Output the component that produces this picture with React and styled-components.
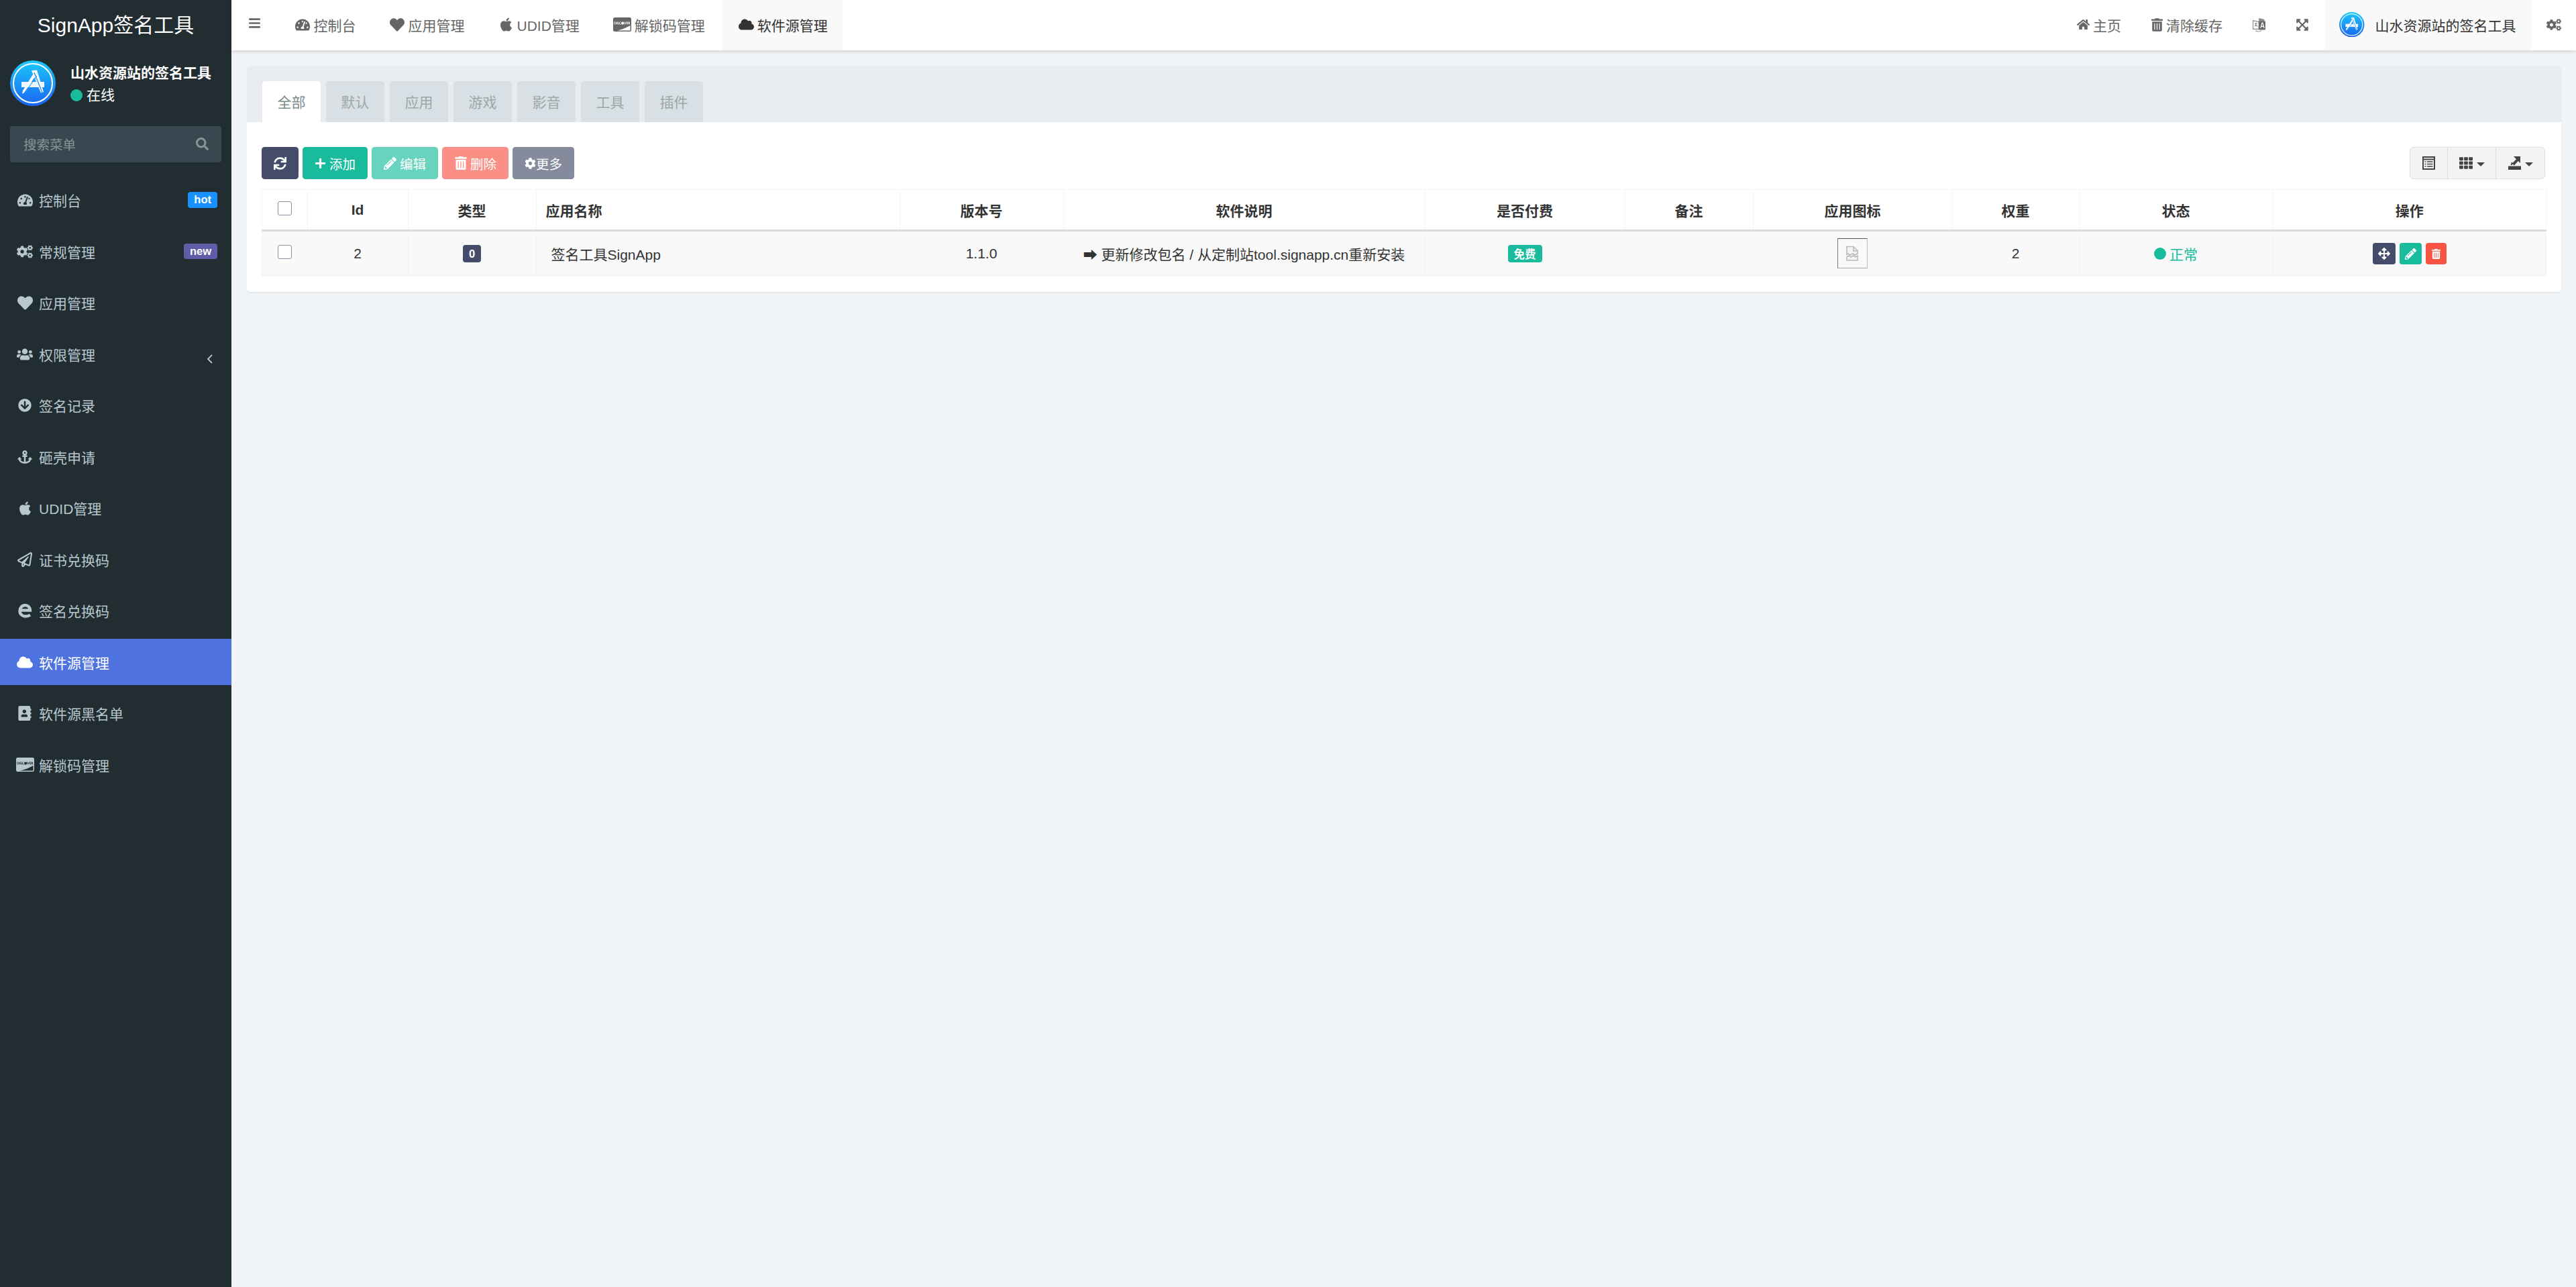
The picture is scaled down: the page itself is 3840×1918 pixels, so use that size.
import React from "react";
import styled, { createGlobalStyle } from "styled-components";
import {
  FaTachometerAlt, FaHeart, FaApple, FaCcDiscover, FaCloud, FaCogs, FaUsers, FaArrowCircleDown,
  FaAnchor, FaRegPaperPlane, FaAddressBook, FaHome, FaTrashAlt, FaExpandArrowsAlt, FaSync,
  FaPlus, FaPencilAlt, FaCog, FaArrowsAlt, FaSearch, FaBars, FaTh,
} from "react-icons/fa";

const FONT = `"Liberation Sans", "Noto Sans CJK SC", sans-serif`;

const Global = createGlobalStyle`
  html, body { margin: 0; padding: 0; height: 100%; background: #f1f4f6; }
  body { font-family: ${FONT}; font-size: 21px; color: #333; }
  * { box-sizing: border-box; }
`;

const Shell = styled.div`display: flex; width: 100%; min-height: 100vh; height: 1918px; overflow: hidden;`;

/* Sidebar */
const Sidebar = styled.aside`width: 345px; flex: none; background: #222d32; display: flex; flex-direction: column;`;
const Logo = styled.div`height: 75px; display: flex; align-items: center; justify-content: center; color: #fff; font-size: 30px; line-height: 75px;`;
const UserPanel = styled.div`display: flex; padding: 15px; height: 98px; gap: 22px;`;
const UserInfo = styled.div`display: flex; flex-direction: column; color: #fff; padding-top: 3px;`;
const UserName = styled.div`font-size: 21px; font-weight: 700; line-height: 32px;`;
const Online = styled.div`display: flex; align-items: center; gap: 6px; font-size: 21px; line-height: 36px; margin-top: -1px;`;
const Dot = styled.span`width: 18px; height: 18px; border-radius: 50%; background: #18bc9c; flex: none;`;
const SearchBox = styled.div`margin: 15px 15px 0; height: 54px; border-radius: 4px; background: #374850; display: flex; align-items: center; justify-content: space-between; padding: 0 19px 2px 20px; color: #8a9396; font-size: 19.5px;`;
const Menu = styled.ul`list-style: none; margin: 21.5px 0 0; padding: 0; display: flex; flex-direction: column; gap: 7.5px;`;
const MenuItem = styled.li`
  height: 69px; display: flex; align-items: center; padding: 0 22px 0 23px; font-size: 21px;
  color: ${(p) => (p.$active ? "#fff" : "#b8c7ce")};
  background: ${(p) => (p.$active ? "#4e73df" : "transparent")};
`;
const MenuIcon = styled.span`width: 28px; flex: none; display: flex; justify-content: center; margin-right: 7px;`;
const MenuLabel = styled.span`flex: 1;`;
const Badge = styled.span`height: 23.5px; padding: 0 9px; border-radius: 4px; font-size: 16.5px; font-weight: 700; line-height: 23px; color: #fff; background: ${(p) => p.$bg}; margin-right: -1px;`;
const Chevron = styled.span`display: flex; margin: 15px 5px 0 0;`;

/* Main */
const Main = styled.main`flex: 1; min-width: 0; display: flex; flex-direction: column;`;
const Navbar = styled.header`height: 75px; background: #fff; display: flex; box-shadow: 0 2px 5px rgba(0,0,0,.14); flex: none; position: relative;`;
const NavGroup = styled.nav`display: flex; gap: ${(p) => p.$gap || 0}px; margin-left: ${(p) => (p.$right ? "auto" : 0)};`;
const Toggle = styled.div`width: 70px; padding: 25px 0 0 25px; color: #666; display: flex;`;
const NavLink = styled.a`
  height: 75px; display: flex; align-items: center; gap: ${(p) => p.$gap ?? 5}px; padding: 0 22.5px 2px;
  font-size: 21px; color: ${(p) => (p.$active ? "#333" : "#666")};
  background: ${(p) => (p.$active ? "#f9f9f9" : "transparent")};
`;
const NavIcon = styled.span`width: ${(p) => p.$w || 27}px; display: flex; justify-content: center; flex: none;`;

const Content = styled.div`flex: 1; padding: 23px 22px 0 23px;`;
const Panel = styled.section`background: #fff; border-radius: 5px; box-shadow: 0 1.5px 1.5px rgba(0,0,0,.05); overflow: hidden;`;
const TabHead = styled.div`height: 84px; background: #e8ecf0; padding: 23px 0 0 23px; display: flex; gap: 8px;`;
const Tab = styled.div`
  width: 87px; height: 61px; border-radius: 4.5px 4.5px 0 0; display: flex; align-items: center; justify-content: center; padding-bottom: 2px; font-size: 21px;
  background: ${(p) => (p.$active ? "#fff" : "#d8dfe5")};
  color: ${(p) => (p.$active ? "#7b8a8b" : "#9ba7a6")};
`;
const PanelBody = styled.div`padding: 37px 23px 23px 22px;`;
const Toolbar = styled.div`display: flex; justify-content: space-between; height: 48px; margin-bottom: 15px;`;
const BtnRow = styled.div`display: flex; gap: 6px;`;
const Btn = styled.button`
  height: 48px; border: 0; border-radius: 4.5px; padding: 0 ${(p) => p.$pad ?? 18}px; display: flex; align-items: center; gap: ${(p) => p.$gap ?? 3}px;
  font: 19.5px ${FONT}; color: #fff; background: ${(p) => p.$bg}; opacity: ${(p) => (p.$faded ? 0.65 : 1)};
`;
const ToolGroup = styled.div`display: flex; height: 48px; border: 1.5px solid #ddd; border-radius: 6px; background: #f4f4f4; color: #444; margin-right: 1px;`;
const ToolBtn = styled.div`
  width: ${(p) => p.$w}px; display: flex; align-items: center; justify-content: center; gap: 6px;
  & + & { border-left: 1.5px solid #ddd; }
`;
const Caret = styled.span`width: 0; height: 0; border: 6px solid transparent; border-top: 6.5px solid #444; border-bottom: 0; margin-top: 3px;`;

const Table = styled.table`width: 100%; table-layout: fixed; border-collapse: collapse; font-size: 21px;`;
const Th = styled.th`
  height: 61px; border: 1.5px solid #f4f4f4; border-bottom: 3px solid #ddd; padding: 0 0 0 ${(p) => (p.$left ? 14 : 0)}px;
  text-align: ${(p) => (p.$left ? "left" : "center")}; font-weight: 700; color: #333; font-size: 21px;
`;
const Td = styled.td`
  height: 68px; border: 1.5px solid #f4f4f4; background: #f9f9f9; padding: 0 0 0 ${(p) => (p.$left ? 22 : 0)}px;
  text-align: ${(p) => (p.$left ? "left" : "center")}; color: #333; white-space: nowrap;
`;
const Check = styled.input.attrs({ type: "checkbox", readOnly: true })`
  appearance: none; display: block; margin: -5px auto 0; width: 21px; height: 21px; background: #fff; border: 1.5px solid #8f8fa3; border-radius: 3px;
`;
const Label = styled.span`
  display: inline-flex; align-items: center; justify-content: center; height: 26px; padding: 0 ${(p) => p.$pad || 9}px; border-radius: 4px;
  color: #fff; font-size: 16.5px; font-weight: 700; background: ${(p) => p.$bg};
`;
const BrokenImg = styled.div`
  width: 45px; height: 45px; margin: -1px auto 0; display: flex; align-items: center; justify-content: center; background: #f9f9f9;
  border: 1.5px solid; border-color: #555 #c0c0c0 #aaa #777;
`;
const Status = styled.span`display: inline-flex; align-items: center; gap: 5px; color: #18bc9c;`;
const ActionRow = styled.div`display: flex; justify-content: center; gap: 6px;`;
const ActionBtn = styled.span`height: 32px; padding: 0 8px; border-radius: 4px; color: #fff; display: flex; align-items: center; background: ${(p) => p.$bg};`;
const Col = styled.col`width: ${(p) => p.$w}px;`;

const AppStore = ({ size }) => (
  <svg width={size} height={size} viewBox="0 0 68 68">
    <defs>
      <linearGradient id={`as${size}`} x1="0" y1="0" x2="0" y2="1">
        <stop offset="0" stopColor="#1cc9fc" />
        <stop offset="1" stopColor="#1a64f0" />
      </linearGradient>
    </defs>
    <circle cx="34" cy="34" r="34" fill={`url(#as${size})`} />
    <circle cx="34" cy="34" r="29" fill="none" stroke="#fff" strokeWidth="2" />
    <path d="M17 32h34v8H17z" fill="#fff" opacity=".92" />
    <path d="M33 16 41 15.5 51 48 47 49.5Z" fill="#fff" transform="translate(-1 -1) " />
    <path d="M40 20 21 48 18 50 19 45 36.5 17Z" fill="#fff" />
    <path d="M36 18 48 48" stroke="#2a9cf7" strokeWidth="1.5" fill="none" />
    <path d="M40 23 23 47" stroke="#2a9cf7" strokeWidth="1.2" fill="none" />
  </svg>
);

const LanguageIcon = () => (
  <svg width="21" height="24" viewBox="1 0 18.5 21.5">
    <path d="M1.5 4.5 10 6.5V17l-8.5 0Z" fill="#fff" stroke="#888" strokeWidth="1.2" />
    <path d="M4 8.5 7.5 9M6 8 4.5 13M5 10.5 8 13" stroke="#777" strokeWidth="1" fill="none" />
    <path d="M10 5.5h9.5V18H10Z" fill="#666" />
    <path d="M10 1 18 3v3h-8Z" fill="#888" />
    <path d="M12.5 15.5 14.7 8h.8l2.2 7.5M13.4 13h3.4" stroke="#fff" strokeWidth="1.2" fill="none" />
    <path d="M5 19c3 2 7 2 9 0" stroke="#999" strokeWidth="1" fill="none" />
  </svg>
);

const ExportIcon = () => (
  <svg width="19" height="20" viewBox="0 0 19 20" fill="#444">
    <rect x="0" y="14.5" width="19" height="5.5" />
    <path d="M8 0h10v10l-3.2-3-6 6.5-3-3L12 4.2Z" />
    <path d="M5 8.5 7.5 11 5 13H3.5Z" />
  </svg>
);

const BrokenIcon = () => (
  <svg width="21" height="24" viewBox="0 0 21 24" fill="#f4f4f4" stroke="#bbb" strokeWidth="1.6">
    <path d="M2 9V1.5h10l6 6V12l-4 2-3-2-4 2-3-2-2 1.5Z" />
    <path d="M12 1.5V8h6" fill="none" />
    <path d="M2 17l3-2 3 2 4-2 3 2 3-2v7H2Z" />
  </svg>
);

const EdgeIcon = () => (
  <svg width="21" height="22" viewBox="0 0 21 22" fill="none" stroke="currentColor" strokeWidth="4.4">
    <path d="M4 10.5h14C18 6 14.5 3 10.5 3 6 3 2.5 6.5 2.5 11.5 2.5 16.5 6.5 19.5 11 19.5c2.5 0 5-.6 7-2" />
  </svg>
);

const ListIcon = () => (
  <svg width="19" height="20" viewBox="0 0 19 20" fill="none" stroke="#444">
    <rect x="1" y="1" width="17" height="18" strokeWidth="2" />
    <path d="M1 4.5h17" strokeWidth="2" />
    <path d="M3.5 8h2M3.5 11.5h2M3.5 15h2M7 8h8.5M7 11.5h8.5M7 15h8.5" strokeWidth="1.7" />
  </svg>
);

const ThinLeft = () => (
  <svg width="10" height="14" viewBox="0 0 10 14" fill="none" stroke="currentColor" strokeWidth="1.8">
    <path d="M8 1 2 7l6 6" />
  </svg>
);

const menu = [
  { icon: <FaTachometerAlt size={23} />, label: "控制台", badge: "hot", bg: "#1890ff" },
  { icon: <FaCogs size={24} />, label: "常规管理", badge: "new", bg: "#605ca8" },
  { icon: <FaHeart size={23} />, label: "应用管理" },
  { icon: <FaUsers size={24} />, label: "权限管理", chevron: true },
  { icon: <FaArrowCircleDown size={20} />, label: "签名记录" },
  { icon: <FaAnchor size={22} />, label: "砸壳申请" },
  { icon: <FaApple size={23} />, label: "UDID管理" },
  { icon: <FaRegPaperPlane size={22} />, label: "证书兑换码" },
  { icon: <EdgeIcon />, label: "签名兑换码" },
  { icon: <FaCloud size={24} />, label: "软件源管理", active: true },
  { icon: <FaAddressBook size={22} />, label: "软件源黑名单" },
  { icon: <FaCcDiscover size={27} />, label: "解锁码管理" },
];

const topTabs = [
  { icon: <FaTachometerAlt size={22} />, label: "控制台" },
  { icon: <FaHeart size={22} />, label: "应用管理" },
  { icon: <FaApple size={23} />, label: "UDID管理" },
  { icon: <FaCcDiscover size={27} />, w: 31, label: "解锁码管理" },
  { icon: <FaCloud size={23} />, label: "软件源管理", active: true },
];

const tabs = ["全部", "默认", "应用", "游戏", "影音", "工具", "插件"];
const widths = [67.5, 150, 191, 542, 244, 539, 298, 191, 297, 189, 289, 407.5];
const heads = ["", "Id", "类型", "应用名称", "版本号", "软件说明", "是否付费", "备注", "应用图标", "权重", "状态", "操作"];

export default function App() {
  return (
    <>
      <Global />
      <Shell>
        <Sidebar>
          <Logo>SignApp签名工具</Logo>
          <UserPanel>
            <AppStore size={68} />
            <UserInfo>
              <UserName>山水资源站的签名工具</UserName>
              <Online><Dot />在线</Online>
            </UserInfo>
          </UserPanel>
          <SearchBox>搜索菜单<FaSearch size={19} /></SearchBox>
          <Menu>
            {menu.map((m) => (
              <MenuItem key={m.label} $active={m.active}>
                <MenuIcon>{m.icon}</MenuIcon>
                <MenuLabel>{m.label}</MenuLabel>
                {m.badge && <Badge $bg={m.bg}>{m.badge}</Badge>}
                {m.chevron && <Chevron><ThinLeft /></Chevron>}
              </MenuItem>
            ))}
          </Menu>
        </Sidebar>
        <Main>
          <Navbar>
            <NavGroup>
              <Toggle><FaBars size={19} /></Toggle>
              <NavGroup $gap={3}>
                {topTabs.map((t) => (
                  <NavLink key={t.label} $active={t.active} $gap={3}>
                    <NavIcon $w={t.w}>{t.icon}</NavIcon>{t.label}
                  </NavLink>
                ))}
              </NavGroup>
            </NavGroup>
            <NavGroup $right>
              <NavLink><NavIcon $w={19}><FaHome size={21} /></NavIcon>主页</NavLink>
              <NavLink><NavIcon $w={17}><FaTrashAlt size={20} /></NavIcon>清除缓存</NavLink>
              <NavLink><NavIcon $w={19}><LanguageIcon /></NavIcon></NavLink>
              <NavLink><NavIcon $w={20}><FaExpandArrowsAlt size={20} /></NavIcon></NavLink>
              <NavLink $active $gap={16}>
                <AppStore size={37.5} />
                山水资源站的签名工具
              </NavLink>
              <NavLink><NavIcon $w={22}><FaCogs size={24} /></NavIcon></NavLink>
            </NavGroup>
          </Navbar>
          <Content>
            <Panel>
              <TabHead>
                {tabs.map((t, i) => <Tab key={t} $active={i === 0}>{t}</Tab>)}
              </TabHead>
              <PanelBody>
                <Toolbar>
                  <BtnRow>
                    <Btn $bg="#444c69"><FaSync size={19} /></Btn>
                    <Btn $bg="#18bc9c" $gap={5}><FaPlus size={17} />添加</Btn>
                    <Btn $bg="#18bc9c" $faded $gap={5}><FaPencilAlt size={19} />编辑</Btn>
                    <Btn $bg="#f75444" $faded $gap={4}><FaTrashAlt size={20} />删除</Btn>
                    <Btn $bg="#444c69" $faded $gap={0}><FaCog size={17} />更多</Btn>
                  </BtnRow>
                  <ToolGroup>
                    <ToolBtn $w={55}><ListIcon /></ToolBtn>
                    <ToolBtn $w={72}><FaTh size={20} /><Caret /></ToolBtn>
                    <ToolBtn $w={73}><ExportIcon /><Caret /></ToolBtn>
                  </ToolGroup>
                </Toolbar>
                <Table>
                  <colgroup>{widths.map((w, i) => <Col key={i} $w={w} />)}</colgroup>
                  <thead>
                    <tr>
                      <Th><Check /></Th>
                      {heads.slice(1).map((h) => <Th key={h} $left={h === "应用名称"}>{h}</Th>)}
                    </tr>
                  </thead>
                  <tbody>
                    <tr>
                      <Td><Check /></Td>
                      <Td>2</Td>
                      <Td><Label $bg="#444c69">0</Label></Td>
                      <Td $left>签名工具SignApp</Td>
                      <Td>1.1.0</Td>
                      <Td>➡ 更新修改包名 / 从定制站tool.signapp.cn重新安装</Td>
                      <Td><Label $bg="#18bc9c">免费</Label></Td>
                      <Td />
                      <Td><BrokenImg><BrokenIcon /></BrokenImg></Td>
                      <Td>2</Td>
                      <Td><Status><Dot />正常</Status></Td>
                      <Td>
                        <ActionRow>
                          <ActionBtn $bg="#444c69"><FaArrowsAlt size={18} /></ActionBtn>
                          <ActionBtn $bg="#18bc9c"><FaPencilAlt size={17} /></ActionBtn>
                          <ActionBtn $bg="#f75444"><FaTrashAlt size={15} /></ActionBtn>
                        </ActionRow>
                      </Td>
                    </tr>
                  </tbody>
                </Table>
              </PanelBody>
            </Panel>
          </Content>
        </Main>
      </Shell>
    </>
  );
}
